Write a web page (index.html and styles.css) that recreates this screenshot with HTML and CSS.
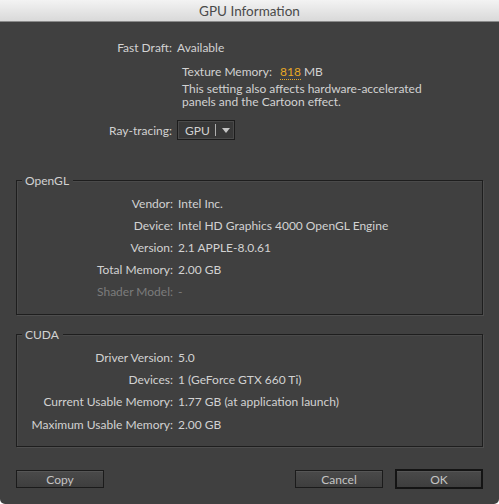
FILE: index.html
```html
<!DOCTYPE html>
<html>
<head>
<meta charset="utf-8">
<link rel="stylesheet" href="styles.css">
</head>
<body>
<div class="window">
  <div class="titlebar">GPU Information</div>
  <div class="content">
    <div class="top">
      <div class="row"><span class="label">Fast Draft:</span><span class="value">Available</span></div>
      <div class="texture">
        <div class="tex-line">Texture Memory: <span class="mem">818</span> MB</div>
        <div class="note">This setting also affects hardware-accelerated<br>panels and the Cartoon effect.</div>
      </div>
      <div class="row ray"><span class="label">Ray-tracing:</span>
        <span class="value">
          <span class="select"><span class="sel-text">GPU</span><span class="sel-sep"></span><svg class="sel-arrow" width="8" height="5" viewBox="0 0 8 5"><path d="M0 0 H8 L4 5 Z" fill="#c4c4c4"/></svg></span>
        </span>
      </div>
    </div>

    <div class="group opengl">
      <div class="legend">OpenGL</div>
      <div class="rows">
        <div class="row"><span class="label">Vendor:</span><span class="value">Intel Inc.</span></div>
        <div class="row"><span class="label">Device:</span><span class="value">Intel HD Graphics 4000 OpenGL Engine</span></div>
        <div class="row"><span class="label">Version:</span><span class="value">2.1 APPLE-8.0.61</span></div>
        <div class="row"><span class="label">Total Memory:</span><span class="value">2.00 GB</span></div>
        <div class="row disabled"><span class="label">Shader Model:</span><span class="value">-</span></div>
      </div>
    </div>

    <div class="group cuda">
      <div class="legend">CUDA</div>
      <div class="rows">
        <div class="row"><span class="label">Driver Version:</span><span class="value">5.0</span></div>
        <div class="row"><span class="label">Devices:</span><span class="value">1 (GeForce GTX 660 Ti)</span></div>
        <div class="row"><span class="label">Current Usable Memory:</span><span class="value">1.77 GB (at application launch)</span></div>
        <div class="row"><span class="label">Maximum Usable Memory:</span><span class="value">2.00 GB</span></div>
      </div>
    </div>

    <div class="buttons">
      <button class="btn">Copy</button>
      <span class="spacer"></span>
      <button class="btn">Cancel</button>
      <button class="btn default">OK</button>
    </div>
  </div>
</div>
</body>
</html>
```

FILE: styles.css
```css
html, body {
  margin: 0;
  padding: 0;
  background: #ffffff;
}

.window {
  width: 499px;
  height: 504px;
  display: flex;
  flex-direction: column;
  background: #404040;
  border-radius: 0 0 5px 5px;
  overflow: hidden;
  font-family: Lato, "DejaVu Sans", sans-serif;
  font-size: 12px;
  color: #d2d2d2;
}

.titlebar {
  flex: none;
  height: 21px;
  line-height: 22px;
  text-align: center;
  font-size: 13.5px;
  color: #4a4a4a;
  background: linear-gradient(#f3f3f3, #d9d9d9);
  border-bottom: 1px solid #8a8a8a;
}

.content {
  flex: 1;
  display: flex;
  flex-direction: column;
  padding: 0 16px;
}

.row {
  display: flex;
  align-items: center;
  height: 22px;
}

.label {
  width: 156px;
  text-align: right;
  flex: none;
}

.value {
  padding-left: 5px;
}

/* fast draft / texture memory / ray-tracing block */
.top {
  padding-top: 15px;
  display: flex;
  flex-direction: column;
}

.top .row {
  height: 20px;
}

.texture {
  padding-left: 166px;
  padding-top: 6px;
}

.tex-line {
  height: 17px;
  line-height: 17px;
}

.mem {
  color: #e8a825;
  margin-left: 5px;
  border-bottom: 1px dotted #e8a825;
}

.note {
  line-height: 13px;
  padding-top: 2px;
}

.ray {
  margin-top: 12px;
}

.select {
  display: inline-flex;
  align-items: center;
  width: 56px;
  height: 18px;
  border: 1px solid #1c1c1c;
  background: #383838;
  box-shadow: inset 0 0 0 1px #4a4a4a;
}

.sel-text {
  padding-left: 7px;
  width: 30px;
}

.sel-sep {
  width: 1px;
  height: 12px;
  background: #b0b0b0;
}

.sel-arrow {
  margin-left: 6px;
}

/* group boxes */
.group {
  position: relative;
  box-sizing: border-box;
  border: 1px solid #1e1e1e;
  box-shadow: 1px 1px 0 #4e4e4e, inset 1px 1px 0 #4a4a4a;
}

.legend {
  position: absolute;
  top: -8px;
  left: 5px;
  padding: 0 4px 0 3px;
  background: #404040;
  line-height: 15px;
}

.opengl {
  margin-top: 40px;
  height: 135px;
}

.opengl .rows {
  padding-top: 11px;
}

.cuda {
  margin-top: 19px;
  height: 113px;
}

.cuda .rows {
  padding-top: 11px;
}

.cuda .row {
  height: 22.3px;
}

.disabled {
  color: #7c7c7c;
}

/* bottom button row */
.buttons {
  display: flex;
  align-items: center;
  margin-top: 22px;
}

.spacer {
  flex: 1;
}

.btn {
  width: 88px;
  height: 18px;
  padding: 0;
  font: inherit;
  color: #c4c4c4;
  background: linear-gradient(#4a4a4a, #3e3e3e);
  border: 1px solid #1b1b1b;
  box-shadow: inset 0 1px 0 #555;
}

.btn + .btn {
  margin-left: 12px;
}

.btn.default {
  height: 20px;
  border: 2px solid #141414;
}
```
